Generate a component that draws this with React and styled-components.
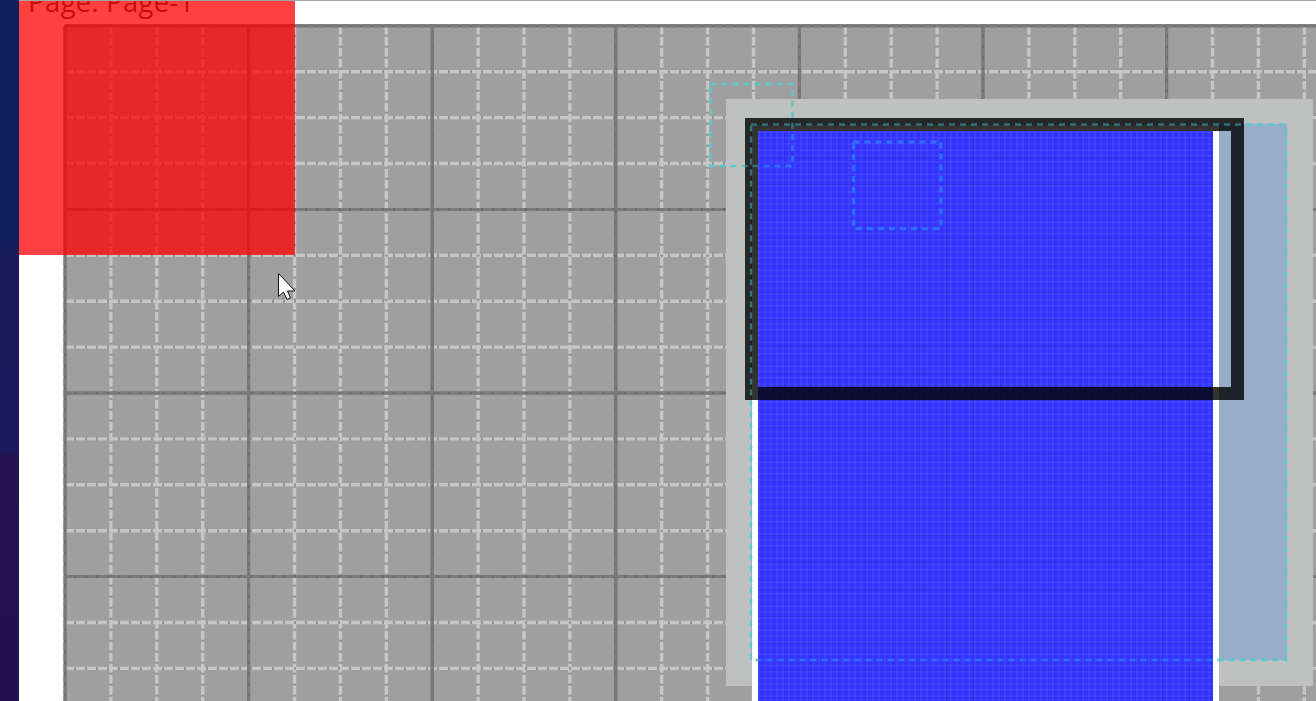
import React from "react";
import styled, { createGlobalStyle } from "styled-components";

const GlobalStyle = createGlobalStyle`
  *, *::before, *::after { box-sizing: border-box; }
  body { margin: 0; background: #fff; font-family: "Open Sans", "Noto Sans", sans-serif; }
`;

const Shell = styled.div`
  display: flex;
  min-height: 100vh;
  overflow: hidden;
`;

const Rail = styled.aside`
  flex: 0 0 19px;
  background: linear-gradient(#101f5c 0%, #101f5c 34%, #1b1a5a 37%, #191b5c 64%, #241252 65%, #221150 100%);
`;

const Canvas = styled.main`
  position: relative;
  flex: 1;
  min-width: 0;
  overflow: hidden;
  border-top: 1px solid #a6a6a6;
`;

const PageLabel = styled.h1`
  margin: -20px 0 0;
  padding-left: 9px;
  font-size: 28px;
  line-height: 40px;
  font-weight: 400;
  color: #303030;
  white-space: nowrap;
`;

const Drawing = styled.svg`
  position: absolute;
  inset: 0;
  width: 100%;
  height: 100%;
  pointer-events: none;
`;

const Shape = styled.div`
  position: absolute;
  left: ${(p) => p.$x}px;
  top: ${(p) => p.$y}px;
  width: ${(p) => p.$w}px;
  height: ${(p) => p.$h}px;
  background: ${(p) => p.$fill};
`;

const Frame = styled(Shape)`
  border: 13px solid rgba(0, 0, 0, 0.8);
`;

const Mesh = styled(Shape)`
  background-image:
    repeating-linear-gradient(90deg, rgba(255, 255, 255, 0.05) 0 2px, transparent 2px 6px),
    repeating-linear-gradient(rgba(255, 255, 255, 0.05) 0 2px, transparent 2px 6px),
    repeating-linear-gradient(90deg, transparent 0 26px, rgba(0, 0, 0, 0.1) 26px 27px),
    repeating-linear-gradient(transparent 0 26px, rgba(0, 0, 0, 0.1) 26px 27px);
`;

const Pointer = styled.svg`
  position: absolute;
  left: 258px;
  top: 271px;
  width: 20px;
  height: 30px;
`;

const STEP = 45.9;
const ORIGIN = { x: 46, y: 24.8 };
const indices = Array.from({ length: 64 }, (_, i) => i);

function GridLine({ index, vertical }) {
  const major = index % 4 === 0;
  const at = (vertical ? ORIGIN.x : ORIGIN.y) + index * STEP;
  const ends = vertical
    ? { x1: at, x2: at, y1: ORIGIN.y, y2: 3000 }
    : { y1: at, y2: at, x1: ORIGIN.x, x2: 3000 };
  return (
    <>
      <line {...ends} stroke={major ? "#6c6c6c" : "#959595"} strokeWidth="3" />
      <line {...ends} stroke={major ? "#7a7a7a" : "#c6c6c6"} strokeWidth={major ? 3 : 3.4} strokeDasharray="9 2" />
    </>
  );
}

function Grid() {
  const minor = indices.filter((i) => i % 4 !== 0);
  const major = indices.filter((i) => i % 4 === 0);
  return (
    <Drawing aria-hidden="true">
      <rect x="45" y="24" width="3000" height="3000" fill="#9f9f9f" />
      {[...minor, ...major].map((i) => (
        <React.Fragment key={i}>
          <GridLine index={i} />
          <GridLine index={i} vertical />
        </React.Fragment>
      ))}
    </Drawing>
  );
}

function GuideBoxes({ color, clip, weight }) {
  return (
    <g fill="none" stroke={color} strokeWidth={weight} strokeDasharray="6 5" clipPath={clip}>
      <rect x="691.5" y="83" width="82" height="82" />
      <rect x="732" y="123.5" width="535" height="535.5" />
      <rect x="834.5" y="141" width="87.5" height="86.5" strokeWidth="3" />
    </g>
  );
}

function Guides() {
  return (
    <Drawing aria-hidden="true">
      <clipPath id="over-frame">
        <path clipRule="evenodd" d="M726 117H1225V399H726ZM739 130V386H1212V130Z" />
      </clipPath>
      <clipPath id="over-mesh">
        <rect x="739" y="130" width="455" height="2000" />
      </clipPath>
      <clipPath id="over-paper">
        <path clipRule="evenodd" d="M0 0H3000V3000H0ZM726 117V399H739V3000H1194V399H1225V117Z" />
      </clipPath>
      <GuideBoxes color="#5cc8ce" clip="url(#over-paper)" weight="2.4" />
      <GuideBoxes color="#346f7a" clip="url(#over-frame)" weight="2.4" />
      <GuideBoxes color="#2f70ff" clip="url(#over-mesh)" weight="2.5" />
    </Drawing>
  );
}

export default function App() {
  return (
    <>
      <GlobalStyle />
      <Shell>
        <Rail />
        <Canvas>
          <PageLabel>Page: Page-1</PageLabel>
          <Grid />
          <Shape $x={707} $y={98} $w={587} $h={587} $fill="#bfc1c0" />
          <Shape $x={732} $y={123} $w={536} $h={536} $fill="#98adc7" />
          <Shape $x={733} $y={124} $w={467} $h={1200} $fill="#fff" />
          <Mesh $x={739} $y={130} $w={455} $h={1200} $fill="#3333ff" />
          <Frame $x={726} $y={117} $w={499} $h={282} $fill="transparent" />
          <Guides />
          <Shape $x={0} $y={-1} $w={276} $h={255} $fill="rgba(255, 0, 0, 0.75)" />
          <Pointer viewBox="0 0 20 30" aria-hidden="true">
            <path
              d="M1.5 1.5V24.5L6.5 20L10 27.5L13.5 26L10.5 19H18Z"
              fill="#fff"
              stroke="#111122"
              strokeWidth="1"
            />
          </Pointer>
        </Canvas>
      </Shell>
    </>
  );
}
